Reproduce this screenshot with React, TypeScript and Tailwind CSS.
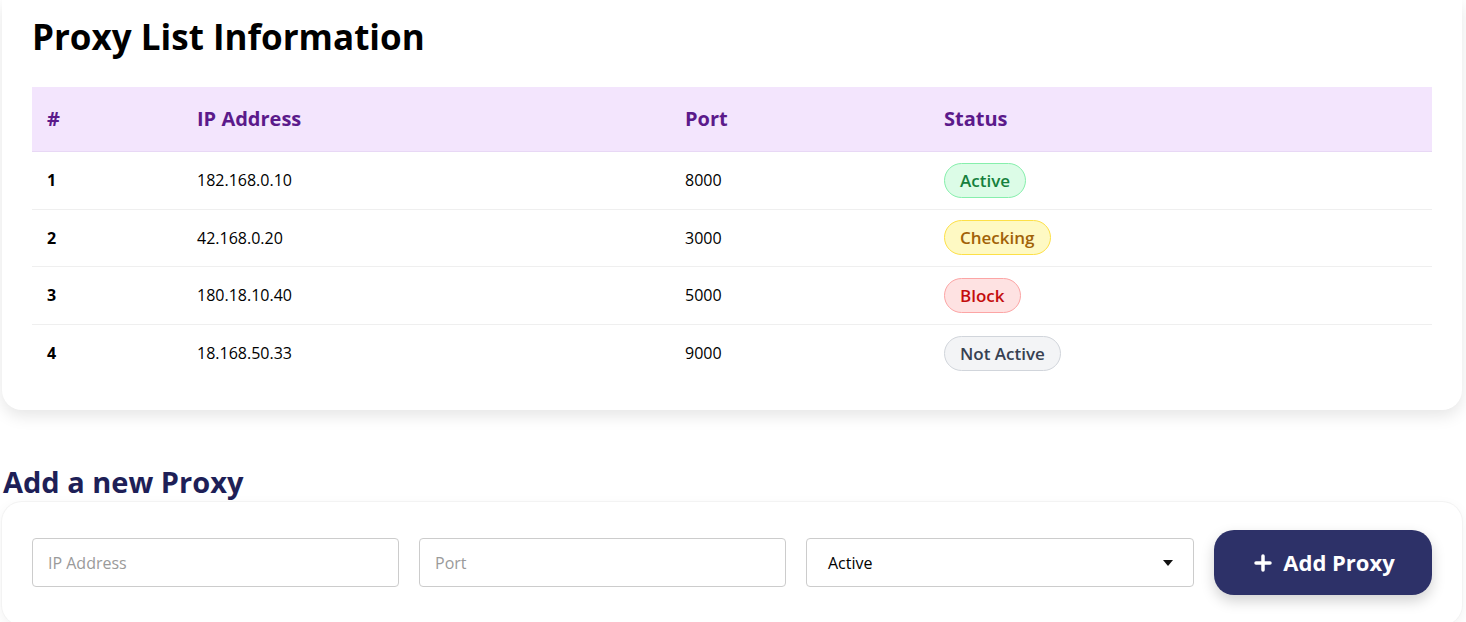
import { Plus } from "lucide-react";

type Status = "Active" | "Checking" | "Block" | "Not Active";

const proxies: { ip: string; port: string; status: Status }[] = [
  { ip: "182.168.0.10", port: "8000", status: "Active" },
  { ip: "42.168.0.20", port: "3000", status: "Checking" },
  { ip: "180.18.10.40", port: "5000", status: "Block" },
  { ip: "18.168.50.33", port: "9000", status: "Not Active" },
];

const badgeStyles: Record<Status, string> = {
  Active: "bg-[#dcfce7] border-[#86efac] text-[#15803d]",
  Checking: "bg-[#fef9c3] border-[#fde047] text-[#a16207]",
  Block: "bg-[#fee2e2] border-[#fca5a5] text-[#c40d0d]",
  "Not Active": "bg-[#f3f4f6] border-[#d1d5db] text-[#374151]",
};

const StatusBadge = ({ status }: { status: Status }) => (
  <span
    className={`inline-flex items-center h-[35px] px-[15px] rounded-full border text-[17px] font-semibold ${badgeStyles[status]}`}
  >
    {status}
  </span>
);

const cols = "grid grid-cols-[150px_488px_259px_1fr]";

export default function App() {
  return (
    <div className="min-h-screen bg-white pl-[2px] pr-[4px] font-['Open_Sans',sans-serif] text-black">
      <section className="bg-white rounded-b-[20px] shadow-[0_6px_16px_rgba(0,0,0,0.1)] px-[30px] pt-[13px] pb-[28px]">
        <h1 className="text-[35px] font-bold leading-[48px] mb-[26px]">Proxy List Information</h1>

        <div className="w-full">
          <div className={`${cols} h-[65px] items-center bg-[#f3e5fd] border-b border-[#e8d8f5] text-[20px] font-bold text-[#5b1a8b]`}>
            <div className="px-[15px]">#</div>
            <div className="px-[15px]">IP Address</div>
            <div className="px-[15px]">Port</div>
            <div className="px-[15px]">Status</div>
          </div>
          {proxies.map((p, i) => (
            <div
              key={i}
              className={`${cols} h-[57.5px] items-center text-[16px] ${i < proxies.length - 1 ? "border-b border-[#efefef]" : ""}`}
            >
              <div className="px-[15px] font-bold">{i + 1}</div>
              <div className="px-[15px]">{p.ip}</div>
              <div className="px-[15px]">{p.port}</div>
              <div className="px-[15px]">
                <StatusBadge status={p.status} />
              </div>
            </div>
          ))}
        </div>
      </section>

      <h2 className="mt-[52px] ml-[1px] text-[29px] font-bold leading-[40px] text-[#1e1f57]">Add a new Proxy</h2>

      <section className="bg-white rounded-[20px] shadow-[0_0_0_1px_#f3f3f3,0_4px_14px_rgba(0,0,0,0.06)] px-[30px] pt-[28px] pb-[30px]">
        <div className="flex items-center gap-[20px]">
          <input
            placeholder="IP Address"
            className="flex-1 h-[49px] border border-[#cccccc] rounded-[4px] px-[15px] text-[16px] placeholder:text-[#9a9a9a] outline-none"
          />
          <input
            placeholder="Port"
            className="flex-1 h-[49px] border border-[#cccccc] rounded-[4px] px-[15px] text-[16px] placeholder:text-[#9a9a9a] outline-none"
          />
          <div className="relative w-[388px] h-[49px] border border-[#cccccc] rounded-[4px] flex items-center px-[21px] text-[16px]">
            <span>Active</span>
            <svg className="absolute right-[20px] top-1/2 -translate-y-1/2" width="10" height="6" viewBox="0 0 10 6">
              <path d="M0 0h10L5 6z" fill="#111" />
            </svg>
          </div>
          <button className="w-[218px] h-[65px] rounded-[20px] bg-[#2d3168] text-white text-[22px] font-bold flex items-center justify-center gap-[8px] shadow-[0_6px_14px_rgba(0,0,0,0.18)]">
            <Plus size={24} strokeWidth={3.5} />
            Add Proxy
          </button>
        </div>
      </section>
    </div>
  );
}
